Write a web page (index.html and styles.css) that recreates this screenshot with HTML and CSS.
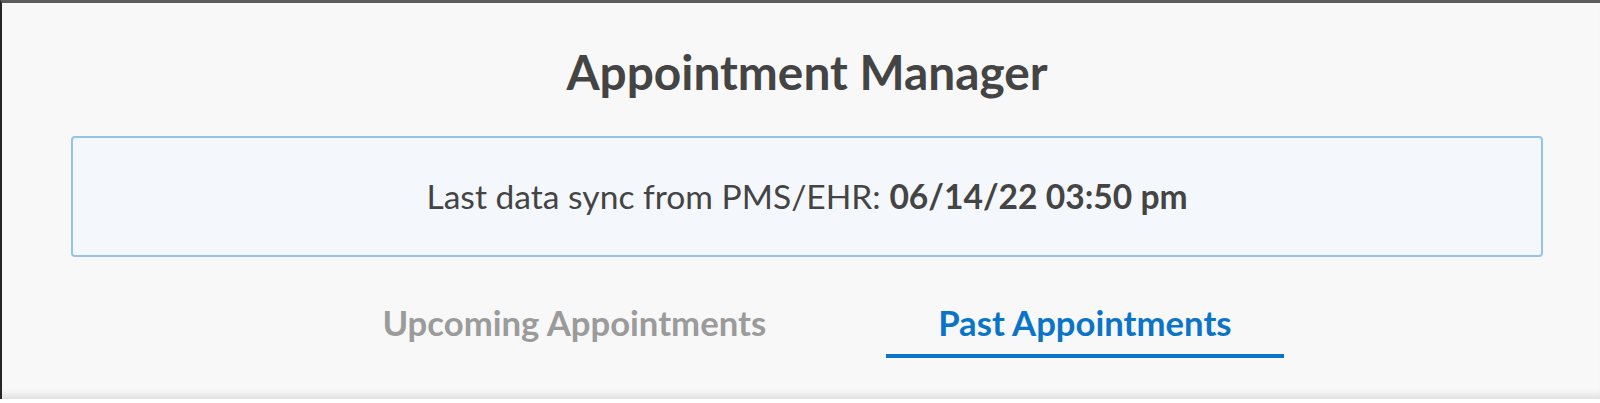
FILE: index.html
```html
<!DOCTYPE html>
<html lang="en">
<head>
<meta charset="utf-8">
<title>Appointment Manager</title>
<link rel="stylesheet" href="styles.css">
</head>
<body>
<div class="frame">
  <div class="panel">
    <h1 class="title">Appointment Manager</h1>
    <div class="sync-box">
      <p class="sync-text">Last data sync from PMS/EHR: <strong>06/14/22 03:50 pm</strong></p>
    </div>
    <nav class="tabs">
      <a class="tab">Upcoming Appointments</a>
      <a class="tab tab-active">Past Appointments</a>
    </nav>
  </div>
</div>
</body>
</html>
```

FILE: styles.css
```css
html, body {
  margin: 0;
  padding: 0;
  height: 403px;
  overflow: hidden;
  background: #ffffff;
  font-family: Lato, "Open Sans", sans-serif;
}

.frame {
  border-top: 3px solid #5d5d5d;
  border-left: 2px solid #262626;
  background: #f8f8f8;
  box-shadow: inset 0 -9px 8px -6px rgba(0, 0, 0, 0.12);
}

.panel {
  padding: 40px 57px 41px 69px;
}

.title {
  margin: 0;
  text-align: center;
  font-size: 47.8px;
  font-weight: 700;
  line-height: 57.6px;
  color: #444444;
}

.sync-box {
  margin-top: 35px;
  height: 117px;
  border: 2px solid #93c5ea;
  border-radius: 4px;
  background: #f4f8fc;
  display: flex;
  align-items: center;
  justify-content: center;
}

.sync-text {
  margin: 0;
  font-size: 33.6px;
  color: #444444;
}

.sync-text strong {
  font-weight: 700;
}

.tabs {
  margin-top: 32px;
  display: flex;
  justify-content: center;
  gap: 68px;
}

.tab {
  padding: 15px 52px 13px;
  border-bottom: 4px solid transparent;
  font-size: 34.7px;
  font-weight: 700;
  line-height: 37px;
  color: #9b9b9b;
}

.tab-active {
  color: #0a74c8;
  border-bottom-color: #0a74c8;
}
```
